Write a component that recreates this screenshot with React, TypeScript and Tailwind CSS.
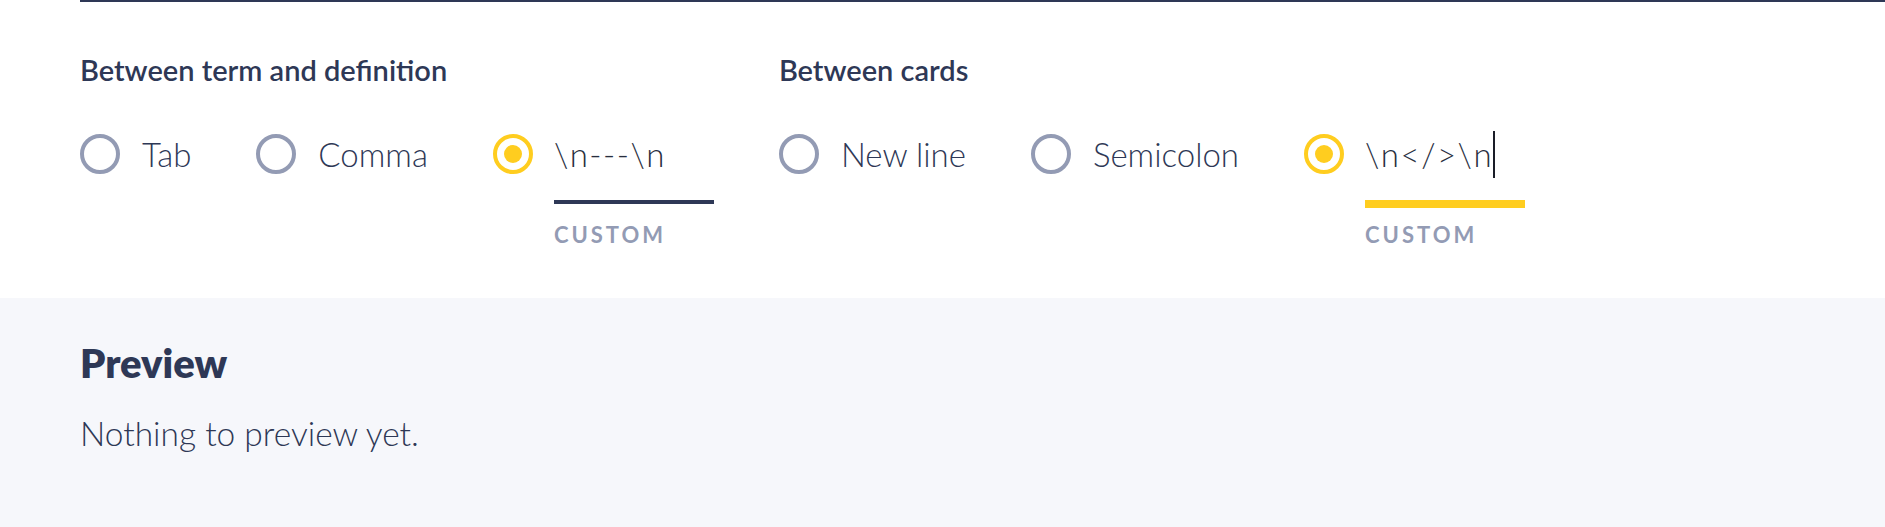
import React from 'react';

interface OptionProps {
  label: string;
}

function Radio({ checked }: { checked?: boolean }) {
  if (checked) {
    return (
      <span className="w-10 h-10 shrink-0 rounded-full border-4 border-[#ffcd1f] flex items-center justify-center">
        <span className="w-[18px] h-[18px] rounded-full bg-[#ffcd1f]" />
      </span>
    );
  }
  return <span className="w-10 h-10 shrink-0 rounded-full border-4 border-[#939bb4]" />;
}

function Option({ label }: OptionProps) {
  return (
    <label className="flex items-center gap-[22px] h-10 cursor-pointer">
      <Radio />
      <span className="text-[33px] leading-[40px] font-light text-[#2e3856]">{label}</span>
    </label>
  );
}

function CustomOption({ value, focused }: { value: string; focused?: boolean }) {
  return (
    <div className="flex items-start gap-[21px]">
      <Radio checked />
      <div className="flex flex-col w-[160px]">
        <div className="h-10 flex items-center text-[33px] leading-[40px] font-light tracking-[1.5px] text-[#282e3e]">
          <span>{value}</span>
          {focused && <span className="inline-block w-[2px] h-[47px] bg-[#1a1d28]" />}
        </div>
        <div className="h-[8px] mt-[26px]">
          {focused ? (
            <div className="h-[8px] bg-[#ffcd1f]" />
          ) : (
            <div className="h-[4px] bg-[#2e3856]" />
          )}
        </div>
        <span className="mt-[16px] text-[22px] leading-[22px] font-bold tracking-[3px] text-[#939bb4]">
          CUSTOM
        </span>
      </div>
    </div>
  );
}

export default function App() {
  return (
    <div className="min-h-screen bg-[#f6f7fb] font-['Lato',sans-serif]">
      <div className="bg-white pb-[52px]">
        <div className="ml-[80px] border-t-2 border-[#2e3856] pt-[54px]">
          <div className="flex gap-[65px]">
            <div>
              <h3 className="text-[29px] leading-[28px] font-semibold text-[#2e3856]">Between term and definition</h3>
              <div className="mt-[50px] flex items-start gap-[65px]">
                <Option label="Tab" />
                <Option label="Comma" />
                <CustomOption value="\n---\n" />
              </div>
            </div>
            <div>
              <h3 className="text-[29px] leading-[28px] font-semibold text-[#2e3856]">Between cards</h3>
              <div className="mt-[50px] flex items-start gap-[65px]">
                <Option label="New line" />
                <Option label="Semicolon" />
                <CustomOption value="\n</>\n" focused />
              </div>
            </div>
          </div>
        </div>
      </div>
      <div className="pl-[80px] pt-[45px] pb-[60px]">
        <h2 className="text-[40px] leading-[40px] font-extrabold text-[#2e3856]">Preview</h2>
        <p className="mt-[30px] text-[33.5px] leading-[40px] font-light text-[#2e3856]">Nothing to preview yet.</p>
      </div>
    </div>
  );
}
